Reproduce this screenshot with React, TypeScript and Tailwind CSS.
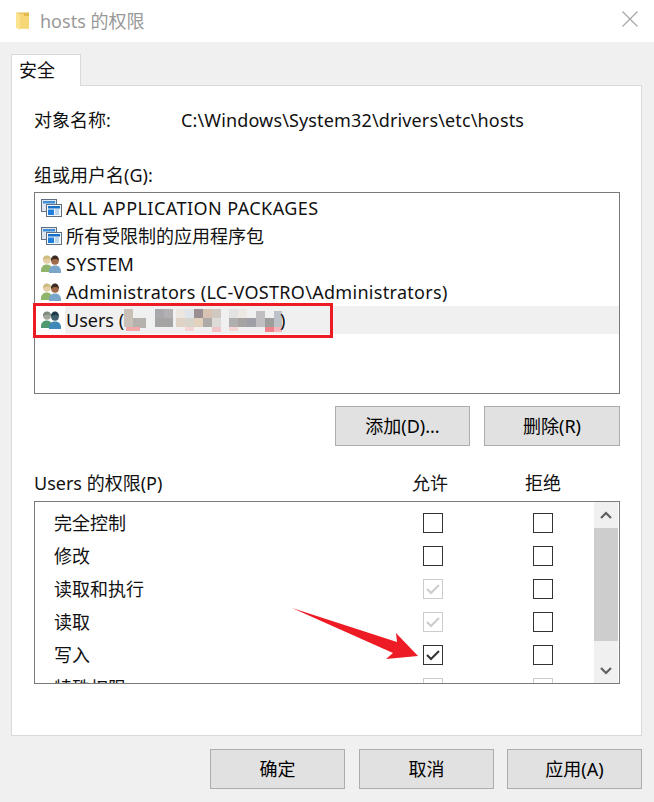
const font = "font-['Noto_Sans','Noto_Sans_CJK_SC',sans-serif]";

function FolderIcon() {
  return (
    <svg width="16" height="20" viewBox="0 0 16 20" className="shrink-0">
      <path d="M1 1.500h8l5 3v13H4l-3-1z" fill="#e8c35c" />
      <path d="M1 1.500 5 3v16l-4-2.500z" fill="#fbe28f" />
      <path d="M5 3h9v14.500H5z" fill="#f6d776" />
      <path d="M9 1.500h5V5H9z" fill="#e3b94f" />
    </svg>
  );
}

function CloseIcon() {
  return (
    <svg width="18" height="18" viewBox="0 0 18 18" className="shrink-0">
      <path d="M1.500 1.500l15 15M16.500 1.500l-15 15" stroke="#a6a6a6" strokeWidth="1.200" fill="none" />
    </svg>
  );
}

function PackageIcon() {
  return (
    <svg width="22" height="20" viewBox="0 0 22 20" className="shrink-0">
      <rect x="1.500" y="1.500" width="15" height="12" fill="#dfe6ee" stroke="#5f7082" />
      <rect x="3" y="3" width="12" height="2.500" fill="#3f8fd8" />
      <rect x="6.500" y="6.500" width="15" height="12" fill="#f4f7fb" stroke="#5f7082" />
      <rect x="8" y="8" width="12" height="2.500" fill="#1670c8" />
      <rect x="8" y="11.500" width="6" height="5.500" fill="#1f7fda" />
      <path d="M15.500 12h4M15.500 14h4M15.500 16h4" stroke="#1670c8" strokeDasharray="1 1" />
    </svg>
  );
}

function UsersIcon({ dim }: { dim?: boolean }) {
  return (
    <svg width="22" height="20" viewBox="0 0 22 20" className="shrink-0">
      <circle cx="7" cy="6" r="3.800" fill={dim ? '#a3a89c' : '#e6cfa6'} />
      <path d="M3 6.500C2.800 2.500 5 1.500 7 1.500s4 1 4 4.500L9 4.500 5 5z" fill={dim ? '#7f8a7c' : '#cdbb80'} />
      <path d="M1 18c-.5-5 2-7.500 6-7.500 2 0 3 .8 4 2V18z" fill={dim ? '#4f9870' : '#8fb56c'} />
      <circle cx="15" cy="7" r="3.800" fill={dim ? '#40606f' : '#a06a48'} />
      <path d="M11 7c-.2-4 2-5.500 4-5.500s4 1.500 4 5.500l-2-2-4 .2z" fill={dim ? '#1e3a4a' : '#3d2a20'} />
      <path d="M9 19c-.5-5 2-7.500 6-7.500s6.500 2.500 6 7.500z" fill={dim ? '#3f88b8' : '#7ba6cc'} />
    </svg>
  );
}

function Redacted() {
  // mosaic over the user name
  const cells: [number, number, number, number, string][] = [
    [0, 1, 9, 18, '#c9c0b8'], [9, 10, 13, 10, '#b5b2ae'], [2, 19, 14, 4, '#f0a8a8'],
    [31, 1, 9, 9, '#a9a8ad'], [40, 1, 9, 9, '#b2b0b2'], [31, 10, 18, 9, '#a6a4a2'],
    [52, 1, 9, 9, '#ece6e0'], [61, 1, 9, 9, '#dfe3ea'], [70, 1, 9, 9, '#9c8f93'], [79, 1, 9, 9, '#d8c3b2'], [88, 1, 9, 9, '#cfc9c2'],
    [52, 10, 9, 9, '#e0d3c6'], [61, 10, 9, 9, '#d8d5cc'], [70, 10, 9, 9, '#e2d2bd'], [79, 10, 9, 9, '#adaaa8'], [88, 10, 9, 9, '#dcdbd8'],
    [88, 19, 9, 5, '#f2c6c6'], [61, 19, 9, 4, '#f3d5d5'],
    [105, 1, 9, 9, '#e2e2e2'], [114, 1, 9, 9, '#ece9e4'], [105, 10, 9, 9, '#b1aeaf'], [114, 10, 9, 9, '#a8a3a3'],
    [123, 10, 9, 9, '#9f9fa7'], [132, 3, 9, 16, '#c0bec0'], [141, 10, 9, 9, '#9d9d9b'], [150, 3, 9, 16, '#bcc2c8'],
    [141, 19, 9, 5, '#f0808a'], [150, 19, 8, 5, '#f4b6bc'], [105, 19, 9, 4, '#f5d6d6'],
  ];
  return (
    <svg width="158" height="24" viewBox="0 0 158 24" className="shrink-0">
      {cells.map(([x, y, w, h, c], i) => (
        <rect key={i} x={x} y={y} width={w} height={h} fill={c} />
      ))}
    </svg>
  );
}

function AccountRow({ icon, label, track, selected, children }: { icon: 'package' | 'user'; label: string; track?: string; selected?: boolean; children?: React.ReactNode }) {
  return (
    <div className="flex h-7 items-center pl-[5px]">
      {icon === 'package' ? <PackageIcon /> : <UsersIcon dim={selected} />}
      <div className={`ml-[3px] flex h-7 flex-1 items-center ${selected ? 'bg-[#f0f0f0]' : ''}`}>
        <span className={`ml-px whitespace-pre ${track ?? ''}`}>{label}</span>
        {children}
      </div>
    </div>
  );
}

function Checkbox({ state }: { state: 'off' | 'on' | 'disabled' }) {
  const border = state === 'disabled' ? 'border-[#cccccc]' : 'border-[#333333]';
  return (
    <div className={`flex h-5 w-5 items-center justify-center border-[1.5px] bg-white ${border}`}>
      {state !== 'off' && (
        <svg width="14" height="12" viewBox="0 0 14 12">
          <path d="M1 6l4 4 8-8" fill="none" stroke={state === 'on' ? '#333333' : '#cccccc'} strokeWidth="2" />
        </svg>
      )}
    </div>
  );
}

const perms: [string, 'off' | 'on' | 'disabled', 'off' | 'on' | 'disabled'][] = [
  ['完全控制', 'off', 'off'],
  ['修改', 'off', 'off'],
  ['读取和执行', 'disabled', 'off'],
  ['读取', 'disabled', 'off'],
  ['写入', 'on', 'off'],
  ['特殊权限', 'disabled', 'disabled'],
];

function DialogButton({ label, w }: { label: string; w: string }) {
  return (
    <button className={`h-10 border border-[#adadad] bg-[#e1e1e1] text-[18px] text-black ${w}`}>{label}</button>
  );
}

export default function App() {
  return (
    <div className={`relative flex h-[802px] w-[654px] flex-col overflow-hidden bg-[#f0f0f0] text-[18px] leading-6 text-[#111] ${font}`}>
      <div className="flex h-[42px] items-center bg-white px-[15px]">
        <FolderIcon />
        <span className="ml-[9px] text-[18px] text-[#999999]">hosts 的权限</span>
        <div className="ml-auto -mt-[5px]"><CloseIcon /></div>
      </div>

      <div className="flex flex-1 flex-col pl-[11px] pr-[12px] pt-3">
        <div className="relative z-10 -mb-px flex h-[32px] w-[70px] items-center border border-b-0 border-[#d9d9d9] bg-white pb-[2px] pl-[7px]">安全</div>
        <div className="h-[651px] border border-[#d9d9d9] bg-white pl-[22px] pr-[21px]">
          <div className="mt-[22px] flex h-6 items-center">
            <span className="w-[147px]">对象名称:</span>
            <span className="tracking-[0.14px]">C:\Windows\System32\drivers\etc\hosts</span>
          </div>
          <div className="mt-[31px] h-6 leading-6">组或用户名(G):</div>
          <div className="mt-[5px] h-[202px] border border-[#7a7a7a] pt-px">
            <AccountRow icon="package" label="ALL APPLICATION PACKAGES" track="tracking-[0.45px]" />
            <AccountRow icon="package" label="所有受限制的应用程序包" />
            <AccountRow icon="user" label="SYSTEM" track="tracking-[0.3px]" />
            <AccountRow icon="user" label="Administrators (LC-VOSTRO\Administrators)" track="tracking-[0.3px]" />
            <AccountRow icon="user" label="Users (" selected>
              <Redacted />
              <span className="-ml-[2px]">)</span>
            </AccountRow>
          </div>
          <div className="mt-[12px] flex justify-end gap-[14px]">
            <DialogButton label="添加(D)..." w="w-[135px]" />
            <DialogButton label="删除(R)" w="w-[136px]" />
          </div>
          <div className="mt-[25px] flex h-6 items-center">
            <span className="w-[378px]">Users 的权限(P)</span>
            <span>允许</span>
            <span className="ml-[77px]">拒绝</span>
          </div>
          <div className="mt-[6px] flex h-[183px] border border-[#7a7a7a]">
            <div className="flex-1 overflow-hidden">
              {perms.map(([label, allow, deny]) => (
                <div key={label} className="flex h-[33px] shrink-0 items-center pl-[19px] first:mt-[4px]">
                  <span className="w-[369px]">{label}</span>
                  <Checkbox state={allow} />
                  <div className="ml-[90px]"><Checkbox state={deny} /></div>
                </div>
              ))}
            </div>
            <div className="mr-[1px] flex w-6 flex-col bg-[#f0f0f0]">
              <div className="flex h-[26px] items-center justify-center">
                <svg width="12" height="9" viewBox="0 0 12 9"><path d="M1 7l5-5 5 5" fill="none" stroke="#606060" strokeWidth="2.200" /></svg>
              </div>
              <div className="h-[113px] bg-[#cdcdcd]" />
              <div className="flex flex-1 items-center justify-center pt-[16px]">
                <svg width="12" height="9" viewBox="0 0 12 9"><path d="M1 2l5 5 5-5" fill="none" stroke="#606060" strokeWidth="2.200" /></svg>
              </div>
            </div>
          </div>
        </div>
        <div className="mt-[13px] flex justify-end">
          <DialogButton label="确定" w="w-[135px]" />
          <div className="ml-[14px]"><DialogButton label="取消" w="w-[135px]" /></div>
          <div className="ml-[13px]"><DialogButton label="应用(A)" w="w-[135px]" /></div>
        </div>
      </div>

      {/* annotations drawn on top of the screenshot */}
      <div className="absolute left-[33px] top-[303px] h-[35px] w-[300px] border-[3px] border-[#ed1c24]" />
      <svg className="absolute left-[290px] top-[605px]" width="130" height="60" viewBox="0 0 130 60">
        <path d="M2 3 L107 37 L106 28 L128 51 L96 54 L103 48 Z" fill="#ed1c24" />
      </svg>
    </div>
  );
}
